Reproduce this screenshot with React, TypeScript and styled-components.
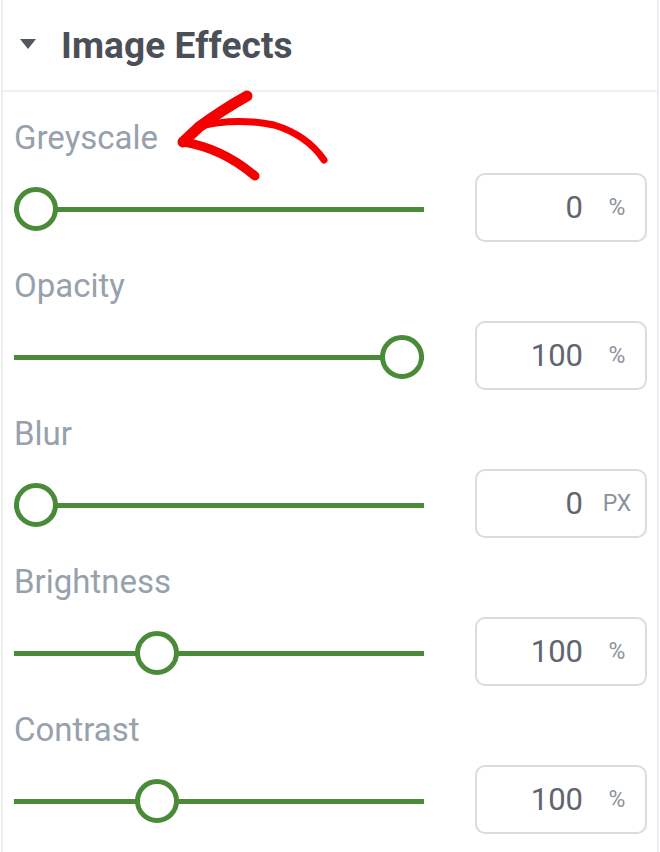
import styled, { createGlobalStyle } from "styled-components";

const GlobalStyle = createGlobalStyle`
  html, body {
    margin: 0;
    padding: 0;
    background: #ffffff;
  }
  body {
    font-family: Roboto, "Liberation Sans", sans-serif;
  }
`;

const Panel = styled.div`
  position: relative;
  width: 654px;
  height: 852px;
  margin: 0 1px;
  border-left: 2px solid #eceef0;
  border-right: 2px solid #eceef0;
  overflow: hidden;
`;

const Header = styled.div`
  height: 92px;
  display: flex;
  align-items: center;
  gap: 25px;
  padding: 0 0 0 17px;
  border-bottom: 2px solid #eef0f2;
  box-sizing: border-box;
`;

const Caret = styled.span`
  width: 0;
  height: 0;
  border-left: 8px solid transparent;
  border-right: 8px solid transparent;
  border-top: 10px solid #52565f;
  margin-top: -2px;
`;

const Title = styled.h2`
  margin: 0;
  font-size: 37px;
  font-weight: 700;
  color: #4b4f58;
  letter-spacing: 0.1px;
`;

const Controls = styled.div`
  display: flex;
  flex-direction: column;
  gap: 24px;
  padding: 26px 9px 0 11px;
`;

const Control = styled.div`
  display: flex;
  flex-direction: column;
  gap: 15px;
`;

const Label = styled.div`
  height: 40px;
  line-height: 40px;
  font-size: 33px;
  color: #97a1ad;
`;

const Row = styled.div`
  display: flex;
  align-items: center;
  gap: 51px;
`;

const Slider = styled.div`
  position: relative;
  width: 410px;
  height: 44px;
  margin-top: 3px;
  display: flex;
  align-items: center;
`;

const Track = styled.div`
  width: 100%;
  height: 5px;
  background: #4a8b39;
`;

const Thumb = styled.div<{ $pos: number }>`
  position: absolute;
  top: 0;
  left: ${(p) => p.$pos * 366}px;
  width: 44px;
  height: 44px;
  box-sizing: border-box;
  border-radius: 50%;
  border: 5px solid #4a8b39;
  background: #ffffff;
`;

const Field = styled.div`
  width: 172px;
  height: 69px;
  box-sizing: border-box;
  border: 2px solid #d9dcdf;
  border-radius: 10px;
  display: flex;
  align-items: center;
  justify-content: flex-end;
  padding-right: 8px;
`;

const Value = styled.span`
  font-size: 31px;
  color: #5f6670;
  margin-right: 14px;
`;

const Unit = styled.span`
  width: 40px;
  text-align: center;
  font-size: 23px;
  color: #8a939d;
`;

const Annotation = styled.svg`
  position: absolute;
  left: 0;
  top: 0;
  pointer-events: none;
`;

const controls = [
  { label: "Greyscale", value: 0, unit: "%", pos: 0 },
  { label: "Opacity", value: 100, unit: "%", pos: 1 },
  { label: "Blur", value: 0, unit: "PX", pos: 0 },
  { label: "Brightness", value: 100, unit: "%", pos: 0.33 },
  { label: "Contrast", value: 100, unit: "%", pos: 0.33 },
];

export default function App() {
  return (
    <>
      <GlobalStyle />
      <Panel>
        <Header>
          <Caret />
          <Title>Image Effects</Title>
        </Header>
        <Controls>
          {controls.map((c) => (
            <Control key={c.label}>
              <Label>{c.label}</Label>
              <Row>
                <Slider>
                  <Track />
                  <Thumb $pos={c.pos} />
                </Slider>
                <Field>
                  <Value>{c.value}</Value>
                  <Unit>{c.unit}</Unit>
                </Field>
              </Row>
            </Control>
          ))}
        </Controls>
        <Annotation width="654" height="220" viewBox="1 0 654 220">
          <g fill="none" stroke="#f40000" strokeLinecap="round" strokeLinejoin="round">
            <path d="M245 96 Q220 110 197 127 L181 142" strokeWidth="11" />
            <path d="M181 142 Q220 148 253 176" strokeWidth="9" />
            <path d="M195 127 Q232 117 272 125 Q305 135 322 160" strokeWidth="7" />
          </g>
        </Annotation>
      </Panel>
    </>
  );
}
